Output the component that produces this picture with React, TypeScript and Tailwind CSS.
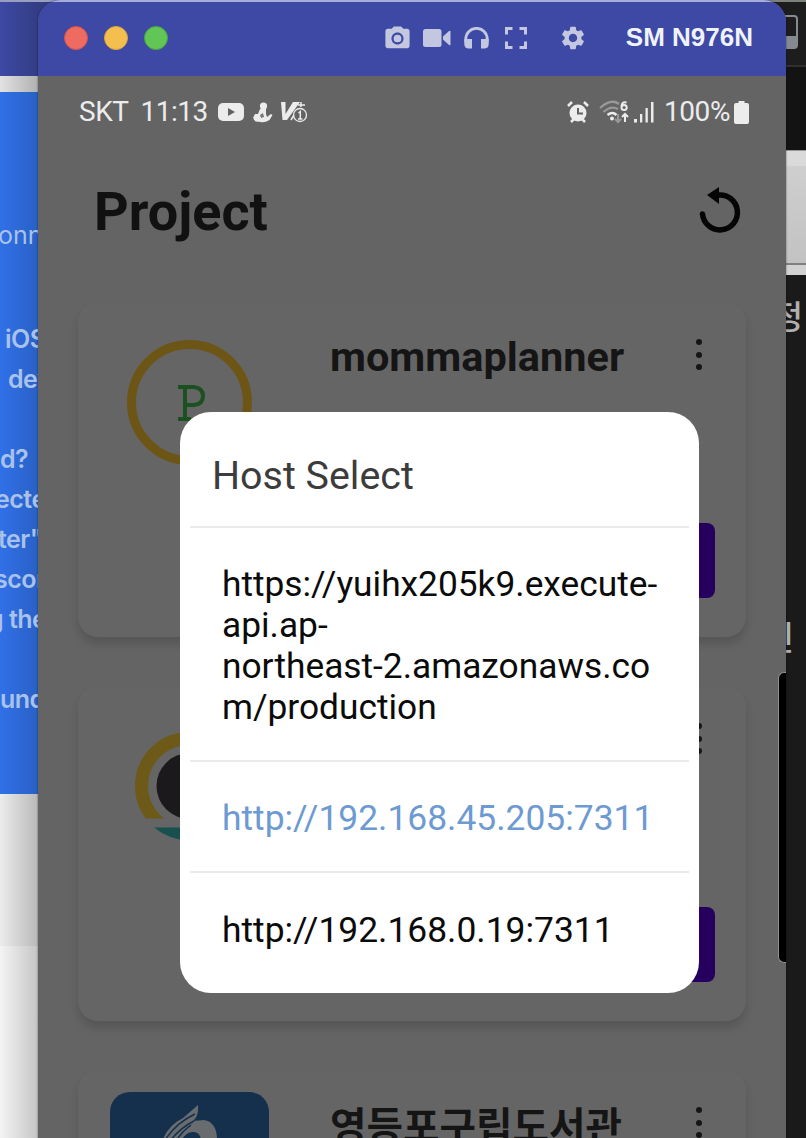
import type { ReactNode } from "react";
import { MdPhotoCamera, MdSettings } from "react-icons/md";

const notes = [
  { text: "iOS", cls: "ml-[5px] mt-[64px]" },
  { text: "dev", cls: "ml-[8px]" },
  { text: "d?", cls: "ml-0 mt-10" },
  { text: "ected", cls: "-ml-[5px]" },
  { text: 'ter"', cls: "-ml-[2px]" },
  { text: "scon", cls: "-ml-[6px]" },
  { text: "g the", cls: "-ml-[12px]" },
  { text: "und", cls: "-ml-0 mt-10" },
];

function Backdrop() {
  return (
    <div className="flex h-full w-full justify-between bg-[#3b3b3b]">
      <div className="flex w-[60px] flex-col">
        <div className="h-[76px] border-t-2 border-[#9a9fc0] bg-linear-to-r from-[#3d49a3] from-0% to-[#333d85] to-65%" />
        <div className="h-4 bg-linear-to-r from-[#e2e2e2] to-[#b0b0b0] to-65%" />
        <div className="h-[702px] whitespace-nowrap bg-linear-to-r from-[#3070e8] to-[#2960c4] to-65% font-['Inter',sans-serif] text-[25px] text-[#a9c2ea]">
          <div className="-ml-[2px] pt-[123px] leading-10">onn</div>
          <div className="font-semibold leading-10 tracking-[-0.5px]">
            {notes.map((n) => (
              <div key={n.text} className={n.cls}>{n.text}</div>
            ))}
          </div>
        </div>
        <div className="h-[152px] bg-linear-to-r from-[#ececec] to-[#b8b8b8] to-65%" />
        <div className="flex-1 bg-linear-to-r from-[#f4f4f4] to-[#c4c4c4] to-65%" />
      </div>
      <div className="flex w-[60px] flex-col bg-[#1a1a1a]">
        <div className="flex h-[67px] justify-end border-b-2 border-t-2 border-b-[#303030] border-t-[#7d827d] bg-[#1d1d1d] pr-2 pt-[13px]">
          <div className="flex h-[34px] w-[30px] flex-col justify-end rounded-[4px] border-2 border-[#858a92]">
            <div className="h-[11px] bg-[#858a92]" />
          </div>
        </div>
        <div className="h-[83px] bg-[#131313]" />
        <div className="h-4 border-t border-[#999] bg-[#dadada]" />
        <div className="h-[99px] border-b-2 border-[#808080] bg-linear-to-b from-[#cfcfcf] to-[#c2c2c2]" />
        <div className="h-[10px] bg-[#d2d2d2]" />
        <div className="pr-[3px] pt-[18px] text-right font-['Noto_Sans_CJK_KR',sans-serif] text-[33px] font-medium leading-[44px] text-[#b0b0b0]">정</div>
        <div className="pr-[12px] pt-[277px] text-right font-['Noto_Sans_CJK_KR',sans-serif] text-[33px] font-medium leading-[44px] text-[#b0b0b0]">인</div>
      </div>
    </div>
  );
}

function TitleBar() {
  return (
    <div className="flex h-[76px] shrink-0 items-center border-t-2 border-[#a7acd8] bg-[#3d49a5] pb-[2px] pl-[26px] pr-[33px] text-[#c3c8e0]">
      <div className="flex gap-4">
        <div className="size-6 rounded-full border border-[#d4524a] bg-[#ed6b60]" />
        <div className="size-6 rounded-full border border-[#d9a43c] bg-[#f5bf4f]" />
        <div className="size-6 rounded-full border border-[#4aa73c] bg-[#61c655]" />
      </div>
      <MdPhotoCamera className="ml-[215px] size-[29px]" />
      <svg className="ml-[11px] h-[18px] w-[28px]" viewBox="0 0 28 18" fill="currentColor">
        <rect width="18.5" height="18" rx="2.5" />
        <path d="M20 7.5 26 2q1.5-1 1.5 .8v12.400q0 1.800-1.500 .8L20 10.500Z" />
      </svg>
      <svg className="ml-[13px] h-[22px] w-[25px]" viewBox="0 0 25 22" fill="none">
        <path d="M1.800 15V12a10.700 10.700 0 0 1 21.400 0v3" stroke="currentColor" strokeWidth="2.800" />
        <path d="M.3 12h7.700v9.500H4Q.3 21 .3 17ZM24.700 12H17v9.500h4Q24.700 21 24.700 17Z" fill="currentColor" />
      </svg>
      <svg className="ml-4 h-[22px] w-[22px]" viewBox="0 0 22 22" fill="none" stroke="currentColor" strokeWidth="3">
        <path d="M1.500 7.500V1.500H7.500M14.500 1.500h6V7.500M20.500 14.500v6H14.500M7.500 20.500H1.500V14.500" />
      </svg>
      <MdSettings className="ml-[32px] size-[28px]" />
      <div className="ml-auto whitespace-nowrap pb-[2px] font-['Liberation_Sans',sans-serif] text-[26px] font-bold leading-none text-[#f0f2fa]">SM N976N</div>
    </div>
  );
}

function StatusBar() {
  return (
    <div className="flex h-[70px] shrink-0 items-center pl-[41px] pr-[37px] pt-[2px] text-[28px] leading-none text-[#ececec]">
      <span className="tracking-[-0.5px]">SKT</span>
      <span className="ml-[12px] tracking-[-0.5px]">11:13</span>
      <svg className="ml-[10px] h-[20px] w-[26px]" viewBox="0 0 26 20">
        <rect y="1" width="26" height="18" rx="5" fill="currentColor" />
        <path d="m10 6 7 4-7 4Z" fill="#636363" />
      </svg>
      <svg className="ml-[9px] h-[21px] w-[20px]" viewBox="0 0 20 21" fill="currentColor">
        <circle cx="10.500" cy="4" r="3.600" />
        <path d="M7 7h6l0 5 1 3 4-3 1.500 1-3 5q-5 3-9 2l-5-.500Q-1 16 1 14l1-2 3 0Z" />
        <path d="m7 13 3-2 1 4-3 1Z" fill="#777" />
      </svg>
      <svg className="ml-[8px] h-[22px] w-[27px]" viewBox="0 0 27 22" fill="none" stroke="currentColor">
        <path d="M0 1h4.500v12L12 1h7L6 19H1.500Z" fill="currentColor" stroke="none" />
        <circle cx="19" cy="14" r="6.500" fill="#636363" strokeWidth="1.300" />
        <path d="M17.500 12 19.300 10.500v7.500M17 18h4.500M17 4h7M20 1v5M10 19l3-5" strokeWidth="1.500" />
      </svg>
      <svg className="ml-auto h-[22px] w-[22px]" viewBox="0 0 22 22" fill="currentColor">
        <circle cx="11" cy="12" r="8.500" />
        <path d="m1 5 4-4M17 1l4 4M4 21l3-3M18 21l-3-3" stroke="currentColor" strokeWidth="2.500" />
        <path d="M11 7v5.500h5" fill="none" stroke="#636363" strokeWidth="2" />
      </svg>
      <svg className="ml-[10px] h-[24px] w-[30px]" viewBox="0 0 30 24" fill="none" stroke="currentColor">
        <path d="M1 8Q12-2 20 4M4.500 12Q12 5 19 9" stroke="#999" strokeWidth="2.200" />
        <path d="M8.500 15q5-4 9 0" strokeWidth="2.500" />
        <circle cx="13" cy="18.500" r="2" fill="currentColor" stroke="none" />
        <path d="M19 14v8m-3-3 3 3 3-3" stroke="#999" strokeWidth="2" />
        <path d="M26 22v-8m-3 3 3-3 3 3" strokeWidth="2" />
        <path d="M27.500 2.500q-5-1-5 4m0 1a2.600 2.600 0 1 0 5.200 0a2.600 2.600 0 1 0-5.200 0" strokeWidth="2" />
      </svg>
      <svg className="ml-[5px] h-[21px] w-[20px]" viewBox="0 0 20 21" fill="currentColor">
        <path d="M0 17h3v3.500H0ZM6 12h2.300v8.500H6ZM11.500 6h2.300v14.500h-2.300ZM17 0h2.500v20.500H17Z" />
      </svg>
      <span className="ml-[10px] tracking-[-0.4px]">100%</span>
      <svg className="ml-[4px] h-[23px] w-[15px]" viewBox="0 0 15 23" fill="currentColor">
        <path d="M4.500 0h6v2H13q2 0 2 2v17q0 2-2 2H2q-2 0-2-2V4q0-2 2-2h2.500Z" />
      </svg>
    </div>
  );
}

function ProjectCard({ name, logo, korean }: { name: string; logo: ReactNode; korean?: boolean }) {
  return (
    <div className="flex h-[335px] shrink-0 flex-col rounded-[20px] bg-[#656565] shadow-[0_7px_9px_rgba(0,0,0,0.14)]">
      <div className="flex h-[221px] shrink-0 items-start">
        <div className="w-[252px] shrink-0">{logo}</div>
        <div
          className={
            korean
              ? "mt-[32px] flex-1 whitespace-nowrap font-['Noto_Sans_CJK_KR',sans-serif] text-[39.7px] font-bold leading-[44px] text-[#151515]"
              : "mt-[33px] flex-1 whitespace-nowrap text-[41.5px] font-bold leading-[44px] text-[#151515]"
          }
        >
          {name}
        </div>
        <div className="mr-[44px] mt-[37px] flex flex-col gap-[6.5px]">
          <i className="size-[6px] rounded-full bg-[#151515]" />
          <i className="size-[6px] rounded-full bg-[#151515]" />
          <i className="size-[6px] rounded-full bg-[#151515]" />
        </div>
      </div>
      <div className="mr-[31px] h-[75px] w-[200px] self-end rounded-[8px] bg-[#26005f]" />
    </div>
  );
}

function LetterLogo() {
  return (
    <div className="ml-[49px] mt-[38px] flex size-[125px] items-center justify-center rounded-full border-[9px] border-[#6d5615] pl-[3px]">
      <svg viewBox="0 0 28 36" className="h-[36px] w-[28px]" fill="none" stroke="#1b5020" strokeWidth="4">
        <path d="M1 2h16q9 1 9 9t-9 9H8M8 2v32M1 34h13" />
      </svg>
    </div>
  );
}

function EyeLogo() {
  return (
    <svg className="ml-[57px] mt-[46px] h-[108px] w-[108px]" viewBox="0 0 108 108">
      <circle cx="54" cy="54" r="47.500" fill="none" stroke="#6d5a18" strokeWidth="13" />
      <path d="M0 86.500h108V108H0Z" fill="#656565" />
      <circle cx="54.500" cy="54" r="33" fill="#1b191c" />
      <path d="M19.200 95.500a54 54 0 0 0 69.600 0Z" fill="#17504f" />
    </svg>
  );
}

function LibraryLogo() {
  return (
    <svg className="ml-[32px] mt-[22px] h-[159px] w-[159px] rounded-[20px] bg-[#15304d]" viewBox="0 0 159 159">
      <path d="M52 50Q57 34 73 26L88 13Q89 24 83 29L94 28Q107 30 107 48V80H91V48Q90 39 82 40Q76 40 70 50Z" fill="#696c6e" />
      <path d="M55 48Q66 31 85 22M59 50Q70 36 84 29M65 51Q71 40 81 33" fill="none" stroke="#15304d" strokeWidth="1.500" />
    </svg>
  );
}

function HostDialog() {
  return (
    <div className="absolute left-[142px] top-[412px] flex h-[581px] w-[519px] flex-col rounded-[31px] bg-white px-[10px] text-[35.4px] leading-[41px] text-[#0b0b0b]">
      <div className="flex h-[114px] items-center pl-[22px] pt-[13px] text-[39.4px] text-[#3c3c3c]">Host Select</div>
      <div className="h-[234px] whitespace-nowrap border-t-2 border-[#eaeaea] pl-[32px] pt-[36px] text-[35.3px]">
        <div>https://yuihx205k9.execute-</div>
        <div>api.ap-</div>
        <div>northeast-2.amazonaws.co</div>
        <div>m/production</div>
      </div>
      <div className="h-[111px] whitespace-nowrap border-t-2 border-[#eaeaea] pl-[32px] pt-[36px] text-[#6e9ad2]">http://192.168.45.205:7311</div>
      <div className="whitespace-nowrap border-t-2 border-[#eaeaea] pl-[32px] pt-[37px]">http://192.168.0.19:7311</div>
    </div>
  );
}

export default function App() {
  return (
    <div className="relative h-[1138px] w-[806px] overflow-hidden">
      <Backdrop />
      <div className="absolute left-[38px] top-0 flex h-[1170px] w-[748px] flex-col overflow-hidden rounded-t-[22px] bg-[#646464] font-['Roboto',sans-serif] shadow-[0_0_2px_rgba(0,0,0,0.6)]">
        <TitleBar />
        <StatusBar />
        <div className="flex h-[156px] shrink-0 items-start justify-between pl-[56px] pr-[44px]">
          <h1 className="mt-[36px] text-[54px] font-bold leading-[60px] text-[#111]">Project</h1>
          <svg className="mt-[40px] h-[48px] w-[44px]" viewBox="0 0 44 48" fill="none">
            <path d="M4.500 28A17.500 17.500 0 1 0 20 9" stroke="#050505" strokeWidth="5.500" strokeLinecap="round" />
            <path d="M9 9 21 1v17Z" fill="#050505" />
          </svg>
        </div>
        <div className="flex shrink-0 flex-col gap-[49px] px-[40px]">
          <ProjectCard name="mommaplanner" logo={<LetterLogo />} />
          <ProjectCard name="" logo={<EyeLogo />} />
          <ProjectCard name="영등포구립도서관" logo={<LibraryLogo />} korean />
        </div>
        <div className="absolute right-0 top-[672px] h-[291px] w-2 rounded-l-[6px] border-y border-l border-[#909090] bg-black" />
        <HostDialog />
      </div>
    </div>
  );
}
